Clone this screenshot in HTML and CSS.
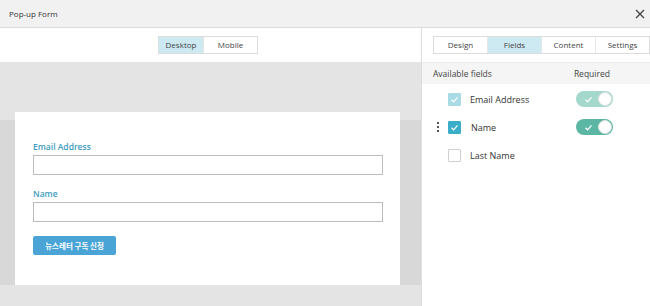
FILE: index.html
```html
<!DOCTYPE html>
<html lang="en">
<head>
    <meta charset="UTF-8">
    <title>Pop-up Form</title>
    <link rel="stylesheet" href="styles.css">
</head>
<body>
    <div class="topbar">
        <span class="title">Pop-up Form</span>
        <svg class="close" width="10" height="10" viewBox="0 0 10 10"><path d="M1 1L9 9M9 1L1 9" stroke="#444" stroke-width="1.3"/></svg>
    </div>
    <div class="main">
        <div class="preview">
            <div class="bar">
                <div class="seg">
                    <span class="seg-btn active">Desktop</span>
                    <span class="seg-btn">Mobile</span>
                </div>
            </div>
            <div class="canvas">
                <div class="stage">
                    <div class="card">
                        <label class="f-label">Email Address</label>
                        <div class="f-input"></div>
                        <label class="f-label">Name</label>
                        <div class="f-input"></div>
                        <button class="f-btn">뉴스레터 구독 신청</button>
                    </div>
                </div>
            </div>
        </div>
        <div class="sidebar">
            <div class="bar">
                <div class="tabs">
                    <span class="tab">Design</span>
                    <span class="tab active">Fields</span>
                    <span class="tab">Content</span>
                    <span class="tab">Settings</span>
                </div>
            </div>
            <div class="fields-head">
                <span>Available fields</span>
                <span class="req">Required</span>
            </div>
            <div class="field-row">
                <span class="grip"></span>
                <span class="check disabled"><svg width="9" height="9" viewBox="0 0 9 9"><path d="M1.5 4.8L3.6 6.8L7.5 2.3" fill="none" stroke="#fff" stroke-width="1.2"/></svg></span>
                <span class="name">Email Address</span>
                <span class="toggle pale"><svg width="9" height="9" viewBox="0 0 9 9"><path d="M1.5 4.8L3.6 6.8L7.5 2.3" fill="none" stroke="#fff" stroke-width="1.2"/></svg><i class="knob"></i></span>
            </div>
            <div class="field-row">
                <span class="grip"><i></i><i></i><i></i></span>
                <span class="check on"><svg width="9" height="9" viewBox="0 0 9 9"><path d="M1.5 4.8L3.6 6.8L7.5 2.3" fill="none" stroke="#fff" stroke-width="1.2"/></svg></span>
                <span class="name">Name</span>
                <span class="toggle"><svg width="9" height="9" viewBox="0 0 9 9"><path d="M1.5 4.8L3.6 6.8L7.5 2.3" fill="none" stroke="#fff" stroke-width="1.2"/></svg><i class="knob"></i></span>
            </div>
            <div class="field-row">
                <span class="grip"></span>
                <span class="check"></span>
                <span class="name">Last Name</span>
            </div>
        </div>
    </div>
</body>
</html>
```

FILE: styles.css
```css
body {
    margin: 0;
    font-family: "Open Sans", "Noto Sans CJK KR", sans-serif;
    color: #333;
    background: #fff;
    width: 650px;
    height: 306px;
    overflow: hidden;
}
.topbar {
    height: 27px;
    background: #f1f1f1;
    border-bottom: 1px solid #dcdcdc;
    display: flex;
    align-items: center;
    justify-content: space-between;
    padding: 0 5px 0 9px;
}
.title {
    font-size: 8px;
    color: #333;
}
.main {
    display: flex;
    height: 278px;
}
.preview {
    width: 421px;
    border-right: 1px solid #dedede;
    display: flex;
    flex-direction: column;
}
.bar {
    height: 34px;
    display: flex;
    align-items: center;
}
.preview .bar {
    justify-content: center;
    padding-right: 5px;
}
.seg, .tabs {
    display: flex;
    border: 1px solid #dcdcdc;
}
.seg-btn, .tab {
    font-size: 8px;
    height: 16px;
    line-height: 16px;
    text-align: center;
    color: #444;
    background: #fff;
}
.seg-btn {
    width: 44px;
}
.seg-btn + .seg-btn {
    width: 53px;
    border-left: 1px solid #e6e6e6;
}
.seg-btn.active, .tab.active {
    background: #cdeaf2;
}
.canvas {
    flex: 1;
    background: #e4e4e4;
    padding-top: 50px;
}
.stage {
    height: 173px;
    background: linear-gradient(#e4e4e4 8px, #d8d8d8 8px);
    padding-left: 15px;
    padding-right: 5px;
}
.card {
    height: 173px;
    background: #fff;
    padding: 29px 0 0 18px;
    box-sizing: border-box;
    width: 385px;
}
.f-label {
    display: block;
    font-size: 8.5px;
    font-weight: 600;
    color: #3d9cc0;
    line-height: 12px;
    margin-bottom: 2px;
}
.f-input {
    width: 348px;
    height: 18px;
    border: 1px solid #bdbdbd;
    margin-bottom: 13px;
}
.f-input + .f-label + .f-input {
    margin-bottom: 14px;
}
.f-btn {
    display: block;
    width: 83px;
    height: 19px;
    border: none;
    border-radius: 2px;
    background: #4aa5d6;
    color: #fff;
    font-family: "Noto Sans CJK KR", sans-serif;
    font-size: 7.5px;
    font-weight: bold;
    padding: 0;
}
.sidebar {
    flex: 1;
    display: flex;
    flex-direction: column;
}
.sidebar .bar {
    padding-left: 11px;
}
.tab {
    width: 53px;
}
.tab + .tab {
    border-left: 1px solid #e6e6e6;
}
.fields-head {
    height: 21px;
    background: #f5f5f5;
    border-top: 1px solid #ececec;
    display: flex;
    align-items: center;
    font-size: 8.5px;
    color: #444;
    padding-left: 11px;
    margin-bottom: 1px;
}
.req {
    margin-left: 82px;
}
.field-row {
    height: 28px;
    display: flex;
    align-items: center;
}
.grip {
    width: 3px;
    margin-left: 15px;
    margin-right: 8px;
    display: flex;
    flex-direction: column;
    gap: 2px;
}
.grip i {
    width: 2px;
    height: 2px;
    background: #555;
}
.check {
    width: 11px;
    height: 11px;
    border: 1px solid #cfcfcf;
    border-radius: 1px;
    display: flex;
    align-items: center;
    justify-content: center;
    margin-right: 9px;
}
.check.on {
    background: #3aaec8;
    border-color: #3aaec8;
}
.check.disabled {
    background: #a9dbe6;
    border-color: #a9dbe6;
}
.name {
    font-size: 9px;
    color: #333;
    width: 106px;
}
.field-row:nth-child(4) .name {
    margin-left: 1px;
    width: 105px;
}
.toggle {
    width: 37px;
    height: 16px;
    border-radius: 8px;
    background: #5bb6a3;
    display: flex;
    align-items: center;
    justify-content: space-between;
    padding: 0 1px 0 8px;
    box-sizing: border-box;
}
.toggle.pale {
    background: #a4d8cc;
}
.knob {
    width: 14px;
    height: 14px;
    border-radius: 50%;
    background: #fff;
    box-sizing: border-box;
    border: 1px solid #e0e0e0;
}
```
